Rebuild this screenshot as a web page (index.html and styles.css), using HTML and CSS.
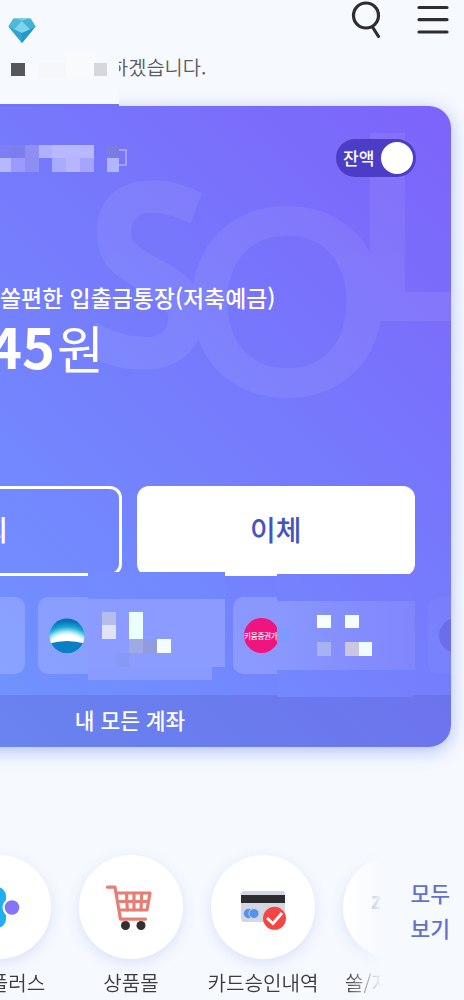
FILE: index.html
```html
<!DOCTYPE html>
<html lang="ko">

<head>
    <meta charset="UTF-8">
    <meta name="viewport" content="width=device-width, initial-scale=1.0">
    <title>SOL</title>
    <link rel="stylesheet" href="styles.css">
</head>

<body>
    <div class="app">
        <header class="header">
            <div class="header-row">
                <svg class="gem" width="28" height="26" viewBox="0 0 28 26">
                    <path d="M5.500 0.500h17L27.500 8.500 14 25 0.500 8.500z" fill="#35acd4" />
                    <path d="M5.500 0.500h17L14 3z" fill="#6fd0e4" />
                    <path d="M5.500 0.500L14 3 6 11.500 0.500 8.500z" fill="#4fb9d8" />
                    <path d="M22.500 0.500L14 3l8 8.500 5.500-3z" fill="#44b2d5" />
                    <path d="M14 3l8 8.500L14 15 6 11.500z" fill="#7cd5ec" />
                    <path d="M6 11.500l8 3.500V25L0.500 8.500z" fill="#2fa5d0" />
                    <path d="M22 11.500L14 15v10L27.500 8.500z" fill="#2598c8" />
                </svg>
                <div class="header-actions">
                    <svg width="32" height="40" viewBox="0 0 32 40">
                        <circle cx="15" cy="15.500" r="12.500" fill="none" stroke="#2e2e30" stroke-width="3.200" />
                        <path d="M21.500 27l6 9.500" stroke="#2e2e30" stroke-width="3.200" stroke-linecap="round" />
                    </svg>
                    <svg width="32" height="40" viewBox="0 0 32 40">
                        <path d="M2 7.500h28M2 19.700h28M2 32h28" stroke="#2e2e30" stroke-width="3.200" stroke-linecap="round" />
                    </svg>
                </div>
            </div>
            <p class="greeting">하겠습니다.</p>
        </header>

        <section class="card">
            <svg class="watermark" viewBox="-191 106 642 641">
                <g fill="#fff" opacity="0.065">
                    <text class="letter-s" x="84" y="367" textLength="128" lengthAdjust="spacingAndGlyphs">S</text>
                    <text x="182" y="396">O</text>
                    <text x="349" y="321">L</text>
                </g>
            </svg>

            <div class="account-row">
                <svg class="copy" width="14" height="22" viewBox="0 0 14 22">
                    <path d="M1 3h11v15H1M1 21h3v-3" fill="none" stroke="#b0adfc" stroke-width="1.500" />
                </svg>
                <div class="toggle"><span>잔액</span><i class="knob"></i></div>
            </div>

            <div class="balance">
                <h2>쏠편한 입출금통장(저축예금)</h2>
                <p class="amount"><strong>45</strong>원</p>
            </div>

            <div class="buttons">
                <button class="btn btn-outline">조회</button>
                <button class="btn btn-fill">이체</button>
            </div>

            <div class="chips">
                <div class="chip"></div>
                <div class="chip">
                    <svg width="36" height="36" viewBox="0 0 36 36">
                        <defs>
                            <clipPath id="disc"><circle cx="18" cy="18" r="17.500" /></clipPath>
                            <radialGradient id="glow" gradientUnits="userSpaceOnUse" cx="18" cy="40" r="40">
                                <stop offset="0.580" stop-color="#fff" />
                                <stop offset="0.660" stop-color="#a5e9f2" />
                                <stop offset="0.780" stop-color="#16a8d6" />
                                <stop offset="0.920" stop-color="#0872b5" />
                            </radialGradient>
                        </defs>
                        <g clip-path="url(#disc)">
                            <rect width="36" height="36" fill="url(#glow)" />
                            <path d="M0 25.500Q18 20.500 36 25.500V36H0z" fill="#0a7fc5" />
                        </g>
                    </svg>
                </div>
                <div class="chip">
                    <div class="kiwoom">키움증권가</div>
                </div>
                <div class="chip chip-faded"><i class="dot"></i></div>
            </div>

            <div class="all-accounts">내 모든 계좌</div>
        </section>

        <section class="shortcuts">
            <div class="shortcut-list">
                <div class="shortcut">
                    <div class="circle">
                        <svg width="104" height="104" viewBox="0 0 104 104">
                            <circle cx="50" cy="41" r="9" fill="#20aff3" />
                            <circle cx="50" cy="64" r="9" fill="#20aff3" />
                            <path d="M34 41h25v7q-5 4 0 9v7H34z" fill="#20aff3" />
                            <circle cx="65" cy="52.500" r="9.500" fill="#fff" />
                            <circle cx="65" cy="52.500" r="7.300" fill="#8575f6" />
                        </svg>
                    </div>
                    <span>신한플러스</span>
                </div>
                <div class="shortcut">
                    <div class="circle">
                        <svg width="104" height="104" viewBox="0 0 104 104">
                            <g fill="none" stroke="#e77e73" stroke-width="3.200" stroke-linecap="round" stroke-linejoin="round">
                                <path d="M28.500 32.200h7.500L41.500 64.200h25" />
                                <path d="M37.500 38h33.500L68 55H40.500" />
                                <path d="M38.500 46.500h31M47.500 38l0.800 17M55 38v17M62.800 38l-0.800 17" />
                            </g>
                            <circle cx="46.500" cy="70.500" r="4.500" fill="#303033" />
                            <circle cx="62" cy="70.500" r="4.500" fill="#303033" />
                        </svg>
                    </div>
                    <span>상품몰</span>
                </div>
                <div class="shortcut">
                    <div class="circle">
                        <svg width="104" height="104" viewBox="0 0 104 104">
                            <rect x="30" y="36" width="44" height="31" rx="3" fill="#d2d7e2" />
                            <rect x="30" y="40" width="44" height="8" fill="#2d2c2e" />
                            <circle cx="37.500" cy="58.500" r="4.700" fill="#5492ef" />
                            <circle cx="43" cy="58.500" r="5" fill="#5492ef" stroke="#d2d7e2" stroke-width="1" />
                            <circle cx="63.500" cy="63.300" r="11.500" fill="#f54545" />
                            <path d="M56 63l6 5.500 9-10.500" fill="none" stroke="#fff" stroke-width="2.800" />
                        </svg>
                    </div>
                    <span>카드승인내역</span>
                </div>
                <div class="shortcut">
                    <div class="circle"><b class="glyph">z</b></div>
                    <span class="label-left">쏠/지</span>
                </div>
            </div>
            <a class="view-all">모두<br>보기</a>
        </section>

        <!-- privacy mask over names and account numbers -->
        <svg class="mask" width="464" height="1000" viewBox="0 0 464 1000" shape-rendering="crispEdges">
            <defs>
                <linearGradient id="m1" gradientUnits="userSpaceOnUse" x1="88" y1="695" x2="225" y2="572">
                    <stop offset="0" stop-color="#718fff" />
                    <stop offset="1" stop-color="#7385fd" />
                </linearGradient>
                <linearGradient id="m2" gradientUnits="userSpaceOnUse" x1="277" y1="697" x2="415" y2="574">
                    <stop offset="0" stop-color="#7388fe" />
                    <stop offset="1" stop-color="#7779fc" />
                </linearGradient>
                <linearGradient id="m3">
                    <stop offset="0" stop-color="#8a98fe" />
                    <stop offset="1" stop-color="#8085fc" />
                </linearGradient>
            </defs>
            <rect x="0" y="52" width="119" height="52" fill="#f6f9fd" />
            <rect x="39" y="63" width="27" height="14" fill="#f6f7f8" />
            <rect x="66" y="52" width="28" height="25" fill="#f9fafb" />
            <rect x="11" y="63" width="14" height="13" fill="#55575b" />
            <rect x="94" y="63" width="13" height="13" fill="#d6d7da" />
            <rect x="0" y="104" width="119" height="3" fill="#7375f3" />

            <rect x="0" y="145" width="11" height="13" fill="#7d7ef3" />
            <rect x="11" y="145" width="14" height="13" fill="#7e7df0" />
            <rect x="25" y="145" width="14" height="13" fill="#918ef2" />
            <rect x="39" y="145" width="13" height="13" fill="#b0b1fe" />
            <rect x="52" y="145" width="42" height="14" fill="#b7b8ff" />
            <rect x="107" y="145" width="12" height="13" fill="#7a7cdf" />
            <rect x="0" y="158" width="11" height="14" fill="#b5b7ff" />
            <rect x="11" y="158" width="14" height="14" fill="#9a9bff" />
            <rect x="25" y="158" width="14" height="14" fill="#8e8df2" />
            <rect x="52" y="158" width="14" height="14" fill="#a9abff" />
            <rect x="66" y="158" width="14" height="14" fill="#b8b5ff" />
            <rect x="80" y="158" width="14" height="14" fill="#a7a5fb" />
            <rect x="107" y="158" width="12" height="14" fill="#b2b5ff" />

            <rect x="88" y="572" width="137" height="123" fill="url(#m1)" />
            <rect x="88" y="599" width="137" height="68" fill="#8b9bff" />
            <rect x="88" y="667" width="124" height="13" fill="#8a9bff" />
            <rect x="102" y="612" width="14" height="13" fill="#b4bdec" />
            <rect x="102" y="625" width="14" height="14" fill="#e1e3f6" />
            <rect x="129" y="612" width="14" height="27" fill="#eafffe" />
            <rect x="129" y="639" width="14" height="14" fill="#9fa9e6" />
            <rect x="143" y="639" width="14" height="14" fill="#8f9ddf" />
            <rect x="157" y="639" width="14" height="14" fill="#f4fdff" />
            <rect x="116" y="653" width="13" height="14" fill="#869af3" />

            <rect x="277" y="574" width="136" height="123" fill="url(#m2)" />
            <rect x="277" y="601" width="138" height="69" fill="url(#m3)" />
            <rect x="277" y="628" width="13" height="14" fill="#7c9bff" />
            <rect x="317" y="615" width="14" height="13" fill="#f6ffff" />
            <rect x="345" y="615" width="14" height="13" fill="#f6ffff" />
            <rect x="317" y="642" width="14" height="14" fill="#a7b2f5" />
            <rect x="345" y="642" width="14" height="14" fill="#c9c8e0" />
            <rect x="359" y="642" width="13" height="14" fill="#f0fbff" />
        </svg>
    </div>
</body>

</html>
```

FILE: styles.css
```css
* {
    margin: 0;
    padding: 0;
    box-sizing: border-box;
}

body {
    font-family: 'Noto Sans CJK KR', 'Noto Sans', sans-serif;
    background: #f6f9fe;
    color: #3c3c3e;
}

.app {
    position: relative;
    width: 464px;
    height: 1000px;
    overflow: hidden;
}

.header {
    height: 106px;
}

.header-row {
    display: flex;
    justify-content: space-between;
    align-items: flex-start;
    height: 52px;
    padding: 0 15px 0 8px;
}

.gem {
    margin-top: 18px;
}

.header-actions {
    display: flex;
    gap: 34px;
}

.greeting {
    padding-left: 110px;
    font-size: 19.800px;
    line-height: 30px;
    font-weight: 350;
    color: #5a5b60;
}

/* the card is wider than the viewport and runs off its left edge */
.card {
    position: relative;
    width: 642px;
    height: 641px;
    margin-left: -191px;
    border-radius: 22px;
    background: linear-gradient(45deg, #709cff 0%, #7094ff 15%, #757bfc 60%, #7d63fa 100%);
    box-shadow: 0 4px 18px rgba(90, 120, 255, 0.45);
    color: #fff;
    overflow: hidden;
    display: flex;
    flex-direction: column;
}

.watermark {
    position: absolute;
    inset: 0;
    font-family: Lato, sans-serif;
    font-size: 260px;
    font-weight: 700;
}

.letter-s {
    font-family: 'Open Sans', sans-serif;
    font-size: 258px;
    font-weight: 700;
}

.account-row {
    position: relative;
    display: flex;
    justify-content: space-between;
    align-items: center;
    height: 38px;
    margin: 33px 35px 0 305px;
}

.toggle {
    display: flex;
    align-items: center;
    justify-content: space-between;
    width: 80px;
    height: 38px;
    padding: 0 3px 0 7px;
    border-radius: 19px;
    background: #4c3dc6;
    font-size: 17px;
    font-weight: 500;
}

.toggle span {
    margin-top: -2px;
}

.knob {
    width: 32px;
    height: 32px;
    border-radius: 50%;
    background: #fff;
}

.balance {
    position: relative;
    height: 206px;
    margin-top: 103px;
    padding-left: 191px;
    white-space: nowrap;
}

.balance h2 {
    font-size: 22.900px;
    line-height: 34px;
    font-weight: 500;
}

.amount {
    margin: -2px 0 0 -11px;
    font-size: 51px;
    line-height: 66px;
    font-weight: 400;
}

.amount strong {
    font-size: 56px;
    font-weight: 700;
    margin-right: 2px;
}

.buttons {
    position: relative;
    display: grid;
    grid-template-columns: 1fr 1fr;
    gap: 15px;
    padding: 0 36px 0 34px;
}

.btn {
    height: 90px;
    padding-bottom: 5px;
    border: 3px solid #fff;
    border-radius: 12px;
    font-family: inherit;
    font-size: 28px;
    font-weight: 500;
}

.btn-outline {
    background: transparent;
    color: #fff;
}

.btn-fill {
    background: #fff;
    color: #4455bf;
}

.chips {
    position: relative;
    display: flex;
    gap: 13px;
    margin-top: 21px;
    padding-left: 34px;
}

.chip {
    display: flex;
    align-items: center;
    flex: 0 0 182px;
    height: 77px;
    padding-left: 11px;
    border-radius: 10px;
    background: rgba(255, 255, 255, 0.17);
}

.chip-faded {
    background: rgba(255, 255, 255, 0.03);
}

.kiwoom {
    width: 35px;
    height: 35px;
    border-radius: 50%;
    background: #f0147f;
    font-size: 7.500px;
    line-height: 35px;
    font-weight: 500;
    letter-spacing: -0.200px;
    white-space: nowrap;
    overflow: hidden;
}

.dot {
    width: 35px;
    height: 35px;
    border-radius: 50%;
    background: rgba(80, 70, 190, 0.3);
}

.all-accounts {
    height: 52px;
    margin-top: auto;
    background: rgba(85, 85, 190, 0.25);
    font-size: 21.400px;
    line-height: 49px;
    font-weight: 500;
    text-align: center;
}

.shortcuts {
    display: flex;
    justify-content: space-between;
    height: 253px;
    padding: 88px 14px 0 0;
}

.shortcut-list {
    display: flex;
    width: 380px;
    height: 165px;
    padding-top: 20px;
    overflow: hidden;
    -webkit-mask-image: linear-gradient(to right, #000 345px, transparent 382px);
    mask-image: linear-gradient(to right, #000 345px, transparent 382px);
}

.shortcut {
    display: flex;
    flex: 0 0 132px;
    flex-direction: column;
    align-items: center;
    font-size: 20.100px;
    line-height: 28px;
    font-weight: 350;
    white-space: nowrap;
}

.shortcut:first-child {
    margin-left: -67px;
}

.circle {
    display: flex;
    align-items: center;
    justify-content: center;
    width: 104px;
    height: 104px;
    margin-bottom: 10px;
    border-radius: 50%;
    background: #fff;
    box-shadow: 0 4px 14px rgba(100, 130, 220, 0.18);
}

.glyph {
    width: 48px;
    margin-top: -16px;
    color: #5a60a0;
    font-size: 22px;
}

.label-left {
    width: 100px;
}

.view-all {
    margin-top: 40px;
    color: #6072cc;
    font-size: 21.500px;
    line-height: 35px;
    font-weight: 500;
}

.mask {
    position: absolute;
    top: 0;
    left: 0;
    pointer-events: none;
}
```
